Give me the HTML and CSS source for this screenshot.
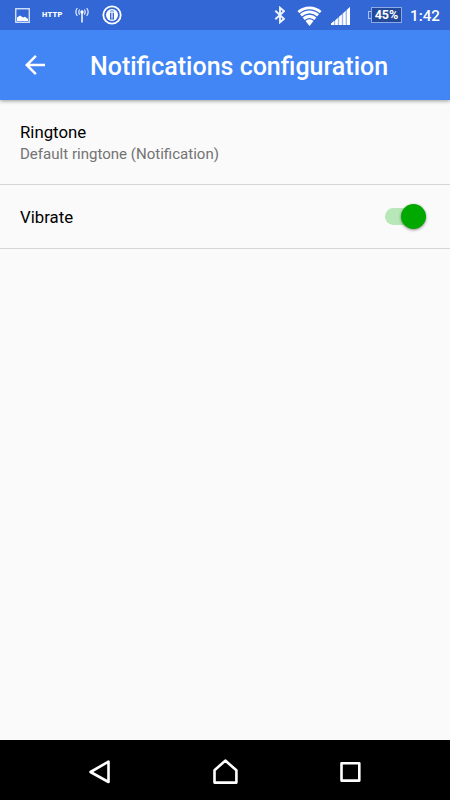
FILE: index.html
```html
<!DOCTYPE html>
<html lang="en">
<head>
<meta charset="utf-8">
<title>Notifications configuration</title>
<link rel="stylesheet" href="styles.css">
</head>
<body>
<div class="screen">
  <div class="status-bar">
    <div class="status-group">
      <svg class="picture" width="15" height="15" viewBox="0 0 15 15"><rect x=".75" y=".75" width="13.5" height="13.5" fill="none" stroke="#dfe8fc" stroke-width="1.3"/><path d="M2 13V9.500L5 7.500L8 9.500L10 8.800L13 11V13Z" fill="#fff"/></svg>
      <span class="http">HTTP</span>
      <svg class="antenna" width="14" height="16" viewBox="0 0 14 16" fill="none" stroke="#e6edfd" stroke-width="1.2"><path d="M7 5.500V15.500" stroke-width="1.7"/><circle cx="7" cy="5" r="1.700" fill="#fff" stroke="none"/><path d="M4.600 2.500Q3 5 4.600 7.600M9.400 2.500Q11 5 9.400 7.600M2.300 1Q-.6 5 2.300 9M11.700 1Q14.600 5 11.700 9"/></svg>
      <svg class="info" width="20" height="20" viewBox="0 0 20 20"><circle cx="10" cy="10" r="8.700" fill="none" stroke="#fff" stroke-width="1.800"/><circle cx="10" cy="10" r="6" fill="#fff"/><path d="M8.500 5.500h3v1.900h-3zM8 8h4v6.500H8z" fill="#3367d6"/><path d="M10 6v7.500" stroke="#fff" stroke-width="1.200"/></svg>
    </div>
    <div class="status-group">
      <svg class="bluetooth" width="11" height="18" viewBox="0 0 11 18" fill="none" stroke="#eef3fe" stroke-width="1.9"><path d="M1.300 4.800L10 12.800L6 16.300V1.700L10 5.200L1.300 13.200"/></svg>
      <svg class="wifi" width="25" height="20" viewBox="0 0 25 20"><path d="M12.500 20L.5 5Q5.500 .5 12.500 .5T24.500 5Z" fill="#fff"/><path d="M2 7.900Q12.500 -.3 23 7.900M4.500 11.400Q12.500 4.500 20.500 11.400M7.500 15Q12.500 10.300 17.500 15" fill="none" stroke="#3367d6" stroke-width="1.300"/></svg>
      <svg class="signal" width="19" height="18" viewBox="0 0 19 18" fill="#fff"><path d="M0 18V17L19 0V18Z" fill="#9db7ef"/><path d="M0 18V16.500L3 14V18ZM4.200 18V13.400L6.800 11V18ZM8.200 18V9.800L10.800 7.500V18ZM12.200 18V6.200L14.600 4V18ZM16 18V2.700L19 0V18Z"/></svg>
      <div class="battery"><span class="battery-tip"></span><span class="battery-level">45%</span></div>
      <span class="clock">1:42</span>
    </div>
  </div>
  <header class="app-bar">
    <svg class="back" width="30" height="30" viewBox="0 0 24 24" fill="#fff"><path d="M20 11H7.830l5.590-5.590L12 4l-8 8 8 8 1.410-1.410L7.830 13H20v-2z"/></svg>
    <h1>Notifications configuration</h1>
  </header>
  <main class="settings">
    <div class="row ringtone">
      <div class="label">Ringtone</div>
      <div class="summary">Default ringtone (Notification)</div>
    </div>
    <div class="row vibrate">
      <div class="label">Vibrate</div>
      <div class="switch"><span class="thumb"></span></div>
    </div>
  </main>
  <nav class="nav-bar">
    <svg width="30" height="30" viewBox="0 0 30 30"><path d="M23.500 6.700V27L5.500 17Z"/></svg>
    <svg width="30" height="30" viewBox="0 0 30 30"><path d="M15.300 5.600L26.400 15.300V27.600H4.500V15.300Z"/></svg>
    <svg width="30" height="30" viewBox="0 0 30 30"><rect x="6.500" y="8.300" width="17.800" height="17.300"/></svg>
  </nav>
</div>
</body>
</html>
```
FILE: styles.css
```css
* { box-sizing: border-box; }
body { margin: 0; font-family: Roboto, sans-serif; }
.screen {
  width: 450px;
  height: 800px;
  display: flex;
  flex-direction: column;
  background: #fafafa;
  overflow: hidden;
}
.status-bar {
  position: relative;
  z-index: 1;
  height: 30px;
  flex: none;
  display: flex;
  justify-content: space-between;
  background: #3367d6;
  color: #fff;
  padding: 0 10px 0 15px;
}
.status-group { display: flex; align-items: center; }
.status-group svg { display: block; flex: none; }
.http {
  width: 21px;
  margin-left: 12px;
  font-size: 7.5px;
  font-weight: 900;
  line-height: 10px;
  letter-spacing: .3px;
}
.antenna { margin-left: 12px; }
.info { margin-left: 13px; }
.bluetooth { margin-right: .5px; }
.wifi { margin: 2px 0 0 11.5px; }
.signal { margin: 1px 0 0 9px; }
.battery { display: flex; align-items: center; margin-left: 18px; }
.battery-tip {
  width: 3px;
  height: 8px;
  border: 1px solid #a9c0f2;
  border-right: 0;
}
.battery-level {
  width: 31px;
  height: 16px;
  border: 1px solid #8eaae6;
  background: #234a9a;
  font-size: 12.5px;
  font-weight: 700;
  line-height: 14px;
  text-align: center;
}
.clock {
  width: 30px;
  margin: 2px 0 0 8px;
  font-size: 15.2px;
  font-weight: 500;
  line-height: 20px;
  white-space: nowrap;
}
.app-bar {
  height: 70px;
  flex: none;
  display: flex;
  align-items: center;
  padding-left: 20px;
  background: #4285f4;
  color: #fff;
  box-shadow: 0 1px 4px rgba(0, 0, 0, .4);
}
.app-bar h1 {
  margin: 3px 0 0 40px;
  font-size: 25px;
  font-weight: 500;
  line-height: 30px;
  white-space: nowrap;
}
.settings { flex: 1; }
.row { border-bottom: 1px solid #d5d5d5; padding: 0 20px; }
.ringtone { height: 85px; padding-top: 22px; }
.vibrate {
  height: 64px;
  display: flex;
  align-items: center;
  justify-content: space-between;
}
.label { font-size: 16.8px; line-height: 21px; color: #000; }
.vibrate .label { margin-top: 2px; }
.summary { font-size: 15.05px; line-height: 22px; color: #737373; white-space: nowrap; }
.switch {
  width: 35px;
  height: 17px;
  margin: 0 10px 0 0;
  border-radius: 9px;
  background: #b8e7b8;
  position: relative;
}
.thumb {
  position: absolute;
  left: 15.5px;
  top: -4px;
  width: 25px;
  height: 25px;
  border-radius: 50%;
  background: #00a800;
  box-shadow: 0 1px 3px rgba(0, 0, 0, .45);
}
.nav-bar {
  height: 60px;
  flex: none;
  display: flex;
  justify-content: center;
  gap: 95px;
  padding-top: 15px;
  background: #000;
}
.nav-bar svg {
  fill: none;
  stroke: #fff;
  stroke-width: 2.6;
  stroke-linejoin: round;
}
```
